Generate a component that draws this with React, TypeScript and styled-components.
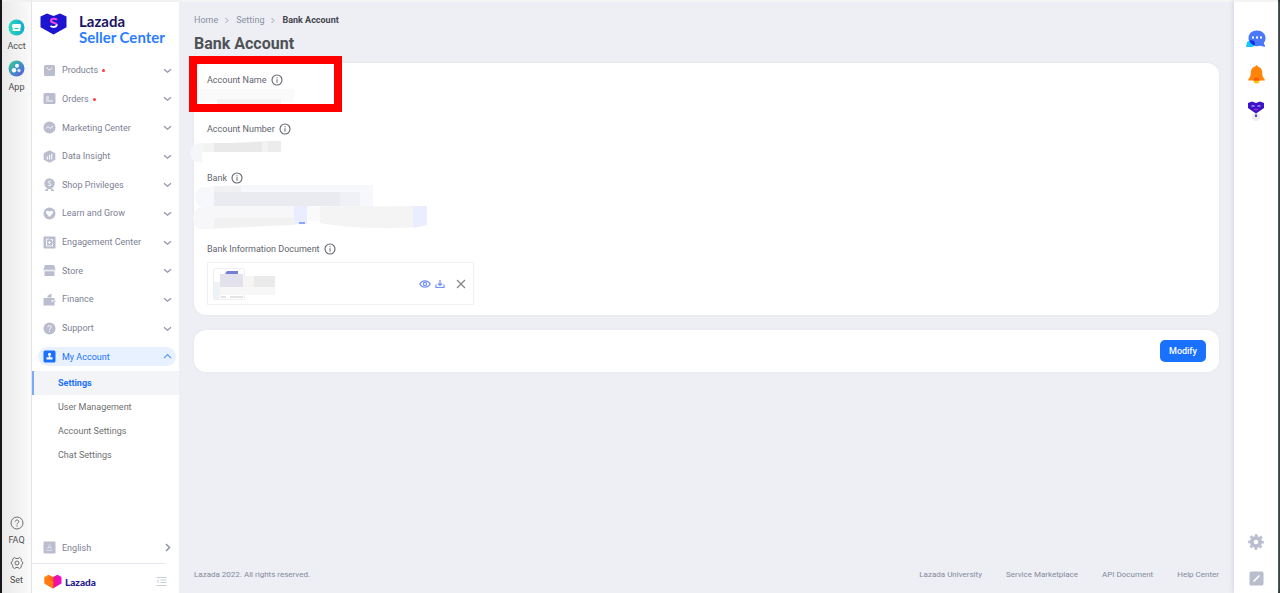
import React from "react";
import styled, { createGlobalStyle } from "styled-components";

const Global = createGlobalStyle`
  *, *::before, *::after { box-sizing: border-box; }
  body { margin: 0; background: #edeff4; font-family: Roboto, "Liberation Sans", sans-serif; font-size: 9px; color: #5b5f6b; }
  ul, ol { list-style: none; margin: 0; padding: 0; }
  a { color: inherit; text-decoration: none; }
  button { font: inherit; color: inherit; border: 0; padding: 0; background: none; cursor: pointer; }
  svg { display: block; flex: none; }
`;

const Shell = styled.div`
  display: flex;
  min-height: 100vh;
  border-left: 2px solid #17171a;
  border-right: 2px solid #17201f;
`;

const Rail = styled.nav`
  width: 30px;
  flex: none;
  display: flex;
  flex-direction: column;
  justify-content: space-between;
  padding: 17px 0 7px;
  border-top: 2px solid #f1f1f1;
  border-right: 1px solid #e2e3e6;
  background: linear-gradient(90deg, #e9e9e9, #f1f1f1 45%, #fafafa);
`;

const RailGroup = styled.div<{ $gap: number }>`
  display: flex;
  flex-direction: column;
  gap: ${(p) => p.$gap}px;
`;

const RailButton = styled.button`
  display: flex;
  flex-direction: column;
  align-items: center;
  gap: 4px;
  line-height: 12px;
  color: #4d4d4d;
`;

const Sidebar = styled.aside`
  width: 147px;
  flex: none;
  display: flex;
  flex-direction: column;
  background: #fff;
  border-top: 2px solid #f1f1f1;
`;

const Brand = styled.a`
  display: flex;
  gap: 12px;
  height: 54px;
  padding: 11px 0 0 8px;
`;

const BrandText = styled.span`
  display: flex;
  flex-direction: column;
  font-family: Lato, sans-serif;
  font-size: 15px;
  line-height: 16px;
  font-weight: 700;
  color: #1b1464;
  white-space: nowrap;
`;

const BrandSub = styled.span`
  color: #2b7cff;
`;

const Menu = styled.ul`
  display: grid;
  grid-auto-rows: 1fr;
  height: 315px;
  align-items: center;
`;

const MenuButton = styled.button<{ $active?: boolean }>`
  display: flex;
  align-items: center;
  width: 138px;
  height: 19px;
  margin-left: 6px;
  padding: 0 4px 0 5px;
  gap: 6px;
  border-radius: 10px;
  background: ${(p) => (p.$active ? "#e8f1ff" : "none")};
  color: ${(p) => (p.$active ? "#1a71ff" : "#7c8194")};
  line-height: 12px;
  white-space: nowrap;
`;

const MenuLabel = styled.span`
  flex: 1;
  text-align: left;
`;

const Dot = styled.i`
  display: inline-block;
  width: 3px;
  height: 3px;
  margin-left: 4px;
  border-radius: 50%;
  background: #ff3b3b;
  vertical-align: middle;
`;

const SubLink = styled.a<{ $active?: boolean }>`
  display: block;
  height: 24px;
  padding-left: ${(p) => (p.$active ? 24 : 26)}px;
  border-left: ${(p) => (p.$active ? "2px solid #7ea9fb" : "0")};
  background: ${(p) => (p.$active ? "#f3f4f8" : "none")};
  color: ${(p) => (p.$active ? "#1a71ff" : "#707070")};
  font-weight: ${(p) => (p.$active ? 700 : 400)};
  line-height: 24px;
`;

const SideBottom = styled.div`
  margin-top: auto;
`;

const SideFoot = styled.div`
  display: flex;
  align-items: center;
  gap: 3px;
  width: 134px;
  height: 30px;
  margin-top: 6px;
  padding: 6px 0 0 12px;
  border-top: 1px solid #e7e9f1;
`;

const FootBrand = styled.span`
  flex: 1;
  font-family: Lato, sans-serif;
  font-size: 10px;
  line-height: 12px;
  font-weight: 900;
  color: #1f1a8c;
`;

const FoldButton = styled.button`
  margin-right: -1px;
`;

const Main = styled.main`
  flex: 1;
  min-width: 0;
  display: flex;
  flex-direction: column;
  padding: 12px 15px;
  border-top: 2px solid #f4f4f4;
`;

const Crumbs = styled.ol`
  display: flex;
  gap: 7px;
  line-height: 12px;
  color: #8b90a2;
`;

const Current = styled.li`
  font-weight: 700;
  color: #45474f;
`;

const Title = styled.h1`
  margin: 8px 0 9px;
  font-size: 16px;
  line-height: 20px;
  font-weight: 700;
  color: #505257;
`;

const Card = styled.section`
  position: relative;
  padding: 10px 13px;
  border-radius: 12px;
  background: #fff;
  box-shadow: 0 0 2px rgba(220, 224, 235, 0.8);
`;

const Highlight = styled.div`
  position: absolute;
  left: -5px;
  top: -7px;
  width: 153px;
  height: 56px;
  border: 8px solid #fe0000;
`;

const Label = styled.div`
  display: flex;
  align-items: center;
  gap: 4px;
  height: 14px;
  line-height: 14px;
  color: #62656e;
`;

const Redaction = styled.svg`
  margin-left: -17px;
`;

const FileBox = styled.div`
  display: flex;
  align-items: center;
  width: 267px;
  height: 43px;
  margin-top: 6px;
  padding: 0 7px 0 5px;
  border: 1px solid #f0f0f2;
`;

const FileActions = styled.div`
  display: flex;
  align-items: center;
  gap: 4px;
  margin-left: auto;
`;

const CloseButton = styled.button`
  margin-left: 7px;
`;

const ActionBar = styled.section`
  display: flex;
  justify-content: flex-end;
  align-items: center;
  height: 42px;
  margin-top: 15px;
  padding-right: 13px;
  border-radius: 12px;
  background: #fff;
  box-shadow: 0 0 2px rgba(220, 224, 235, 0.8);
`;

const Primary = styled.button`
  width: 46px;
  height: 22px;
  border-radius: 5px;
  background: #1a71ff;
  color: #fff;
  font-weight: 500;
`;

const Footer = styled.footer`
  display: flex;
  justify-content: space-between;
  margin-top: auto;
  font-size: 8px;
  line-height: 12px;
  color: #858a9b;
`;

const FooterLinks = styled.nav`
  display: flex;
  gap: 24px;
`;

const Tools = styled.aside`
  width: 44px;
  flex: none;
  display: flex;
  flex-direction: column;
  justify-content: space-between;
  align-items: center;
  padding: 28px 0 7px;
  border-top: 2px solid #f4f4f4;
  background: #fff;
  box-shadow: 0 0 5px rgba(190, 194, 208, 0.8);
`;

const ToolGroup = styled.div<{ $gap: number }>`
  display: flex;
  flex-direction: column;
  align-items: center;
  gap: ${(p) => p.$gap}px;
`;

const G = "#b9bdce";

const icons: Record<string, React.ReactNode> = {
  Products: (<><rect x="1" y="1" width="11" height="11" rx="1.5" fill={G} /><path d="M4 3.500c.5 3 4.500 3 5 0" stroke="#fff" fill="none" /></>),
  Orders: (<><rect x=".5" y="1" width="12" height="11" rx="1.500" fill={G} /><path d="M3 5h3M3 7h3M3 9h7" stroke="#fff" strokeWidth=".9" /></>),
  "Marketing Center": (<><circle cx="6.500" cy="6.500" r="6" fill={G} /><path d="M3 7.500l2-2 2 2 3-2.500" stroke="#fff" fill="none" /></>),
  "Data Insight": (<><path d="M6.500.3l5.800 3v6.400l-5.800 3-5.800-3V3.300z" fill={G} /><path d="M4.300 6.500v3M6.500 5v4.500M8.700 3.800v5.700" stroke="#fff" strokeWidth="1.100" /></>),
  "Shop Privileges": (<><circle cx="6.500" cy="5.500" r="5.200" fill={G} /><path d="M3 12l3.500-2 3.500 2M2 12.500h3M8 12.500h3" stroke={G} fill="none" strokeWidth="1.300" /><path d="M8 3.500c-1.500-1-3 0-2.500 1.200s2.500.8 2.500 2-2 1.300-3 .4" stroke="#fff" fill="none" strokeWidth=".9" /></>),
  "Learn and Grow": (<><circle cx="6.500" cy="6.500" r="6" fill={G} /><path d="M6.500 10L3 6c-.5-2 2-3 3.500-1.200C8 3 10.500 4 10 6z" fill="#fff" /></>),
  "Engagement Center": (<><rect x=".5" y=".5" width="12" height="12" rx="1" fill={G} /><path d="M6 3H3.500v7H9.500V7.500M7.500 3.500h2v2M6.500 5v3M5 6.500h3" stroke="#fff" fill="none" strokeWidth=".9" /></>),
  Store: (<><path d="M2 1h9l1.500 4.500H.5z" fill={G} /><path d="M1.500 7.300h10V12h-10z" fill={G} /><path d="M.5 5.500h12v.8H.5z" fill={G} /></>),
  Finance: (<><path d="M.5 5h11v2H8.500v2h3v3.500H.5z" fill={G} /><path d="M4.500 4.500V2.800L8.500.5v4z" fill={G} /><path d="M9.500 7.500h3v1.300h-3z" fill={G} /></>),
  Support: (<><circle cx="6.500" cy="6.500" r="6" fill={G} /><path d="M4.800 5.200c.1-2.200 3.500-2.100 3.400 0 0 1.200-1.700 1.200-1.700 2.600M6.500 8.900v1" stroke="#fff" fill="none" /></>),
  "My Account": (<><rect x=".5" y=".5" width="12" height="12" rx="1.500" fill="#1a71ff" /><circle cx="6.500" cy="4.300" r="1.500" fill="#fff" /><path d="M5.800 5h1.400v2.200h2.300v2.300h-6V7.200h2.300z" fill="#fff" /></>),
  English: (<><rect x=".5" y=".5" width="12" height="12" rx="1" fill={G} /><path d="M3.500 9.500h6M4.500 8l2-4.500 2 4.500M5 6.700h3" stroke="#dfe2ec" fill="none" strokeWidth=".9" /></>),
};

const MenuIcon = ({ name }: { name: string }) => (
  <svg width="13" height="13" viewBox="0 0 13 13" aria-hidden="true">{icons[name]}</svg>
);

const Chevron = ({ dir }: { dir: "down" | "up" | "right" }) => (
  <svg width="9" height="9" viewBox="0 0 9 9" fill="none" stroke={dir === "up" ? "#5c93f8" : "#8f94a5"} strokeWidth={dir === "right" ? 1.5 : 1.2} aria-hidden="true">
    <path d={dir === "down" ? "M1 3.200l3.500 3 3.500-3" : dir === "up" ? "M1 6.200l3.500-3.500 3.500 3.500" : "M3 1l3.500 3.500L3 8"} />
  </svg>
);

const CrumbArrow = () => (
  <svg width="4" height="12" viewBox="0 0 4 12" fill="none" stroke="#9da1b0" aria-hidden="true">
    <path d="M.5 4l2.500 2.500L.5 9" />
  </svg>
);

const Info = () => (
  <svg width="12" height="12" viewBox="0 0 12 12" fill="none" stroke="#62656e" aria-hidden="true">
    <circle cx="6" cy="6" r="5" strokeWidth="1.100" />
    <path d="M6 5.200v3.500M6 3.200v1.100" />
  </svg>
);

const menu = ["Products", "Orders", "Marketing Center", "Data Insight", "Shop Privileges", "Learn and Grow", "Engagement Center", "Store", "Finance", "Support", "My Account"];
const subMenu = ["Settings", "User Management", "Account Settings", "Chat Settings"];
const links = ["Lazada University", "Service Marketplace", "API Document", "Help Center"];

export default function App() {
  return (
    <>
      <Global />
      <Shell>
        <Rail aria-label="Shortcuts">
          <RailGroup $gap={8}>
            <RailButton>
              <svg width="17" height="17" viewBox="0 0 17 17" aria-hidden="true">
                <defs><linearGradient id="acct" x1="0" x2="1"><stop stopColor="#2bd9bd" /><stop offset="1" stopColor="#12a9cf" /></linearGradient></defs>
                <circle cx="8.500" cy="8.500" r="8" fill="url(#acct)" />
                <path d="M4.500 5h8l.7 2.800-.9.900V12H4.700V8.700l-.9-.9z" fill="#fff" />
                <path d="M6.500 9.500h4" stroke="#22bfc8" />
              </svg>
              Acct
            </RailButton>
            <RailButton>
              <svg width="17" height="17" viewBox="0 0 17 17" aria-hidden="true">
                <defs><linearGradient id="apps" x1="0" y1="0" x2="1" y2="1"><stop stopColor="#3ed68c" /><stop offset=".5" stopColor="#3c93c4" /><stop offset="1" stopColor="#6a4fe0" /></linearGradient></defs>
                <circle cx="8.500" cy="8.500" r="8" fill="url(#apps)" />
                <circle cx="9" cy="5.800" r="2" fill="#fff" /><circle cx="6" cy="10.300" r="2.200" fill="#fff" /><circle cx="11" cy="10.500" r="1.700" fill="#d3dcfa" />
              </svg>
              App
            </RailButton>
          </RailGroup>
          <RailGroup $gap={10}>
            <RailButton>
              <svg width="14" height="14" viewBox="0 0 14 14" fill="none" stroke="#707070" aria-hidden="true">
                <circle cx="7" cy="7" r="6" />
                <path d="M5.200 5.700c.1-2.300 3.700-2.200 3.600 0C8.800 7 7 7 7 8.400M7 9.300v1.200" />
              </svg>
              FAQ
            </RailButton>
            <RailButton>
              <svg width="14" height="14" viewBox="0 0 14 14" fill="none" stroke="#707070" aria-hidden="true">
                <path d="M4.500 1.500L6 2.500h2l1.500-1 1.700 1.300.2 1.900L13 7l-1.600 2.300-.2 1.900-1.700 1.300-1.500-1H6l-1.500 1-1.700-1.300-.2-1.900L1 7l1.600-2.300.2-1.900z" />
                <circle cx="7" cy="7" r="2" />
              </svg>
              Set
            </RailButton>
          </RailGroup>
        </Rail>

        <Sidebar>
          <Brand href="#">
            <svg width="27" height="22" viewBox="0 0 27 22" aria-hidden="true">
              <path d="M.5 3.500L7 .5l6.500 2.500L20 .5l6.500 3v10.800L13.500 21.500.5 14.300z" fill="#1d14d2" />
              <path d="M17 6.700c-2-1.700-6.200-1.300-6 1.200.2 2.400 5.800 1.500 5.800 4" stroke="#f04be2" strokeWidth="2" fill="none" />
              <path d="M16.800 11.500c-.2 2.900-4.300 3.100-6.300 1.400" stroke="#fff" strokeWidth="1.900" fill="none" />
            </svg>
            <BrandText>Lazada<BrandSub>Seller Center</BrandSub></BrandText>
          </Brand>
          <nav aria-label="Main menu">
            <Menu>
              {menu.map((name, i) => {
                const active = name === "My Account";
                return (
                  <li key={name}>
                    <MenuButton $active={active} aria-expanded={active}>
                      <MenuIcon name={name} />
                      <MenuLabel>{name}{i < 2 && <Dot />}</MenuLabel>
                      <Chevron dir={active ? "up" : "down"} />
                    </MenuButton>
                  </li>
                );
              })}
            </Menu>
            <ul>
              {subMenu.map((name, i) => (
                <li key={name}><SubLink href="#" $active={i === 0}>{name}</SubLink></li>
              ))}
            </ul>
          </nav>
          <SideBottom>
            <MenuButton>
              <MenuIcon name="English" />
              <MenuLabel>English</MenuLabel>
              <Chevron dir="right" />
            </MenuButton>
            <SideFoot>
              <svg width="18" height="15" viewBox="0 0 18 15" aria-hidden="true">
                <defs><linearGradient id="heart" x1="0" x2="1"><stop stopColor="#ff9a00" /><stop offset=".5" stopColor="#ff5a1f" /><stop offset=".55" stopColor="#f5128c" /><stop offset="1" stopColor="#e80fd0" /></linearGradient></defs>
                <path d="M.5 3L4.500.7 9 3l4.500-2.300 4 2.300v6.500L9 14.500.5 9.500z" fill="url(#heart)" />
                <path d="M.5 3L9 7.500v7L.5 9.500z" fill="#ff7a14" />
              </svg>
              <FootBrand>Lazada</FootBrand>
              <FoldButton aria-label="Collapse menu">
                <svg width="11" height="11" viewBox="0 0 11 11" fill="none" stroke="#c9cddb" aria-hidden="true">
                  <path d="M.5 1.500h10M4.500 4h6M4.500 6.500h6M.5 9.500h10M3 3.500L1 5.300 3 7" />
                </svg>
              </FoldButton>
            </SideFoot>
          </SideBottom>
        </Sidebar>

        <Main>
          <nav aria-label="Breadcrumb">
            <Crumbs>
              <li><a href="#">Home</a></li>
              <li aria-hidden="true"><CrumbArrow /></li>
              <li><a href="#">Setting</a></li>
              <li aria-hidden="true"><CrumbArrow /></li>
              <Current aria-current="page">Bank Account</Current>
            </Crumbs>
          </nav>
          <Title>Bank Account</Title>
          <Card>
            <Label>Account Name <Info /></Label>
            <Redaction width="110" height="35" aria-hidden="true">
              <path d="M9 2h95v13H9z" fill="#fafafa" />
              <path d="M27 12h64v5H27z" fill="#f3f3f3" />
            </Redaction>
            <Label>Account Number <Info /></Label>
            <Redaction width="110" height="35" aria-hidden="true">
              <path d="M12 7c-7 0-12 4-12 10s5 10 12 10z" fill="#f5f6fa" />
              <path d="M12 7l30 0 30-2h19v11H12z" fill="#f3f3f4" />
              <path d="M24 7h20l28-1v10H24z" fill="#e9e9ea" />
              <path d="M78 5h13v11H78z" fill="#ececec" />
            </Redaction>
            <Label>Bank <Info /></Label>
            <Redaction width="240" height="57" aria-hidden="true">
              <path d="M14 2l30-2h139v22H14C2 22 2 2 14 2z" fill="#f7f8fb" />
              <path d="M24 1h27v6H24z" fill="#f1f1f4" />
              <path d="M24 7h126v14H24z" fill="#e9ebf1" />
              <path d="M150 7h20v14h-20z" fill="#f0f1f6" />
              <path d="M24 21h93v18l-93 5H12c-12 0-12-21 0-22z" fill="#f7f7f9" />
              <path d="M24 33h80v7l-80 3z" fill="#f1f1f2" />
              <path d="M104 21h13v18h-13z" fill="#e9edff" />
              <path d="M117 21h13v15h-13z" fill="#fafafa" />
              <path d="M130 22l107-1v19c-20 5-76 4-107-2z" fill="#f4f4f5" />
              <path d="M223 21h14v19l-14 3z" fill="#e9edff" />
              <path d="M109 37h6v2h-6z" fill="#8da5fa" />
            </Redaction>
            <Label>Bank Information Document <Info /></Label>
            <FileBox>
              <svg width="64" height="32" viewBox="0 0 64 32" aria-hidden="true">
                <rect x=".5" y=".5" width="31" height="31" rx="1" fill="#fff" stroke="#eeeef2" />
                <path d="M1 14h6v17H1z" fill="#eef2f5" />
                <path d="M14 3h11v3H12z" fill="#7480d5" />
                <path d="M7 6h23v13H7z" fill="#e3e2ec" />
                <path d="M30 8h11v11H30z" fill="#f6f5f4" /><path d="M41 8h21v11H41z" fill="#ebeaea" />
                <path d="M7 19h55v8H7z" fill="#f7f7f8" />
                <path d="M8 29h5M17 29h13" stroke="#c8c8ca" />
              </svg>
              <FileActions>
                <button aria-label="Preview">
                  <svg width="12" height="10" viewBox="0 0 12 10" fill="none" stroke="#6f8ffb" strokeWidth="1.200" aria-hidden="true">
                    <path d="M.8 5C3 .7 9 .7 11.200 5 9 9.300 3 9.300.8 5z" /><circle cx="6" cy="5" r="1.600" />
                  </svg>
                </button>
                <button aria-label="Download">
                  <svg width="10" height="10" viewBox="0 0 10 10" fill="none" stroke="#6f8ffb" strokeWidth="1.200" aria-hidden="true">
                    <path d="M5 1v5M3 4.500l2 2 2-2M1 5.500v3h8v-3" />
                  </svg>
                </button>
                <CloseButton aria-label="Remove">
                  <svg width="10" height="10" viewBox="0 0 10 10" stroke="#868686" strokeWidth="1.200" aria-hidden="true"><path d="M1 1l8 8M9 1L1 9" /></svg>
                </CloseButton>
              </FileActions>
            </FileBox>
            <Highlight />
          </Card>
          <ActionBar><Primary>Modify</Primary></ActionBar>
          <Footer>
            <span>Lazada 2022. All rights reserved.</span>
            <FooterLinks>{links.map((l) => <a href="#" key={l}>{l}</a>)}</FooterLinks>
          </Footer>
        </Main>

        <Tools>
          <ToolGroup $gap={17}>
            <button aria-label="Messages">
              <svg width="20" height="18" viewBox="0 0 20 18" aria-hidden="true">
                <path d="M11 .5c5 0 8.500 3.200 8.500 7.500 0 2.500-.9 4-1.700 5l1.500 4-5-1.300C8 17.500 2.500 14 2.500 8 2.500 3.500 6 .5 11 .5z" fill="#4a78fb" />
                <path d="M1 12.500c2-3 7-2.500 8 .5.500 3-2 4-4 4H0z" fill="#12c9ff" />
                <path d="M3.500 10.800c2.500-1.200 5 .2 5.500 2.200.2 1-.1 1.800-.7 2.400C5.500 14.500 4 13 3.500 10.800z" fill="#1c2be8" />
                <path d="M6 7.500h2M10 7.500h2M14 7.500h2" stroke="#fff" strokeWidth="2" />
              </svg>
            </button>
            <button aria-label="Notifications">
              <svg width="17" height="19" viewBox="0 0 17 19" aria-hidden="true">
                <circle cx="8.500" cy="15.500" r="3" fill="#ffc400" />
                <path d="M8.500 0l1.700 1.700c3 .8 4 3 4 6 0 3.300.8 4.600 2.600 6.800v1H.2v-1c1.800-2.200 2.600-3.500 2.600-6.800 0-3 1-5.200 4-6z" fill="#ff8408" />
                <path d="M5.500 15.500a3 3 0 016 0z" fill="#f75b0d" />
              </svg>
            </button>
            <button aria-label="Assistant">
              <svg width="18" height="20" viewBox="0 0 18 20" aria-hidden="true">
                <ellipse cx="9" cy="16" rx="4" ry="4" fill="#eee" />
                <path d="M1 2l4-1.500L9 2l4-1.500L17 2v5l-5 3.500-3 2-3-2L1 7z" fill="#3c14c6" />
                <path d="M4.500 5.500q1.500-1.500 3 0M10.500 5.500q1.500-1.500 3 0" stroke="#a78bff" fill="none" strokeWidth="1.200" />
                <path d="M7 8.500h4" stroke="#b128dc" strokeWidth="1.300" /><path d="M9 13.500v2.500" stroke="#5040cf" strokeWidth="2" />
              </svg>
            </button>
          </ToolGroup>
          <ToolGroup $gap={21}>
            <button aria-label="Preferences">
              <svg width="16" height="16" viewBox="0 0 16 16" aria-hidden="true">
                <circle cx="8" cy="8" r="4.200" fill="none" stroke="#b9bdce" strokeWidth="3.800" />
                <circle cx="8" cy="8" r="6.800" fill="none" stroke="#b9bdce" strokeWidth="2" strokeDasharray="2.900 2.440" strokeDashoffset="1.400" />
              </svg>
            </button>
            <button aria-label="Edit">
              <svg width="15" height="15" viewBox="0 0 15 15" aria-hidden="true">
                <rect x=".5" y=".5" width="14" height="14" rx="1.500" fill="#b9bdce" /><path d="M4.500 10.500l6-6" stroke="#fff" strokeWidth="1.700" />
              </svg>
            </button>
          </ToolGroup>
        </Tools>
      </Shell>
    </>
  );
}
